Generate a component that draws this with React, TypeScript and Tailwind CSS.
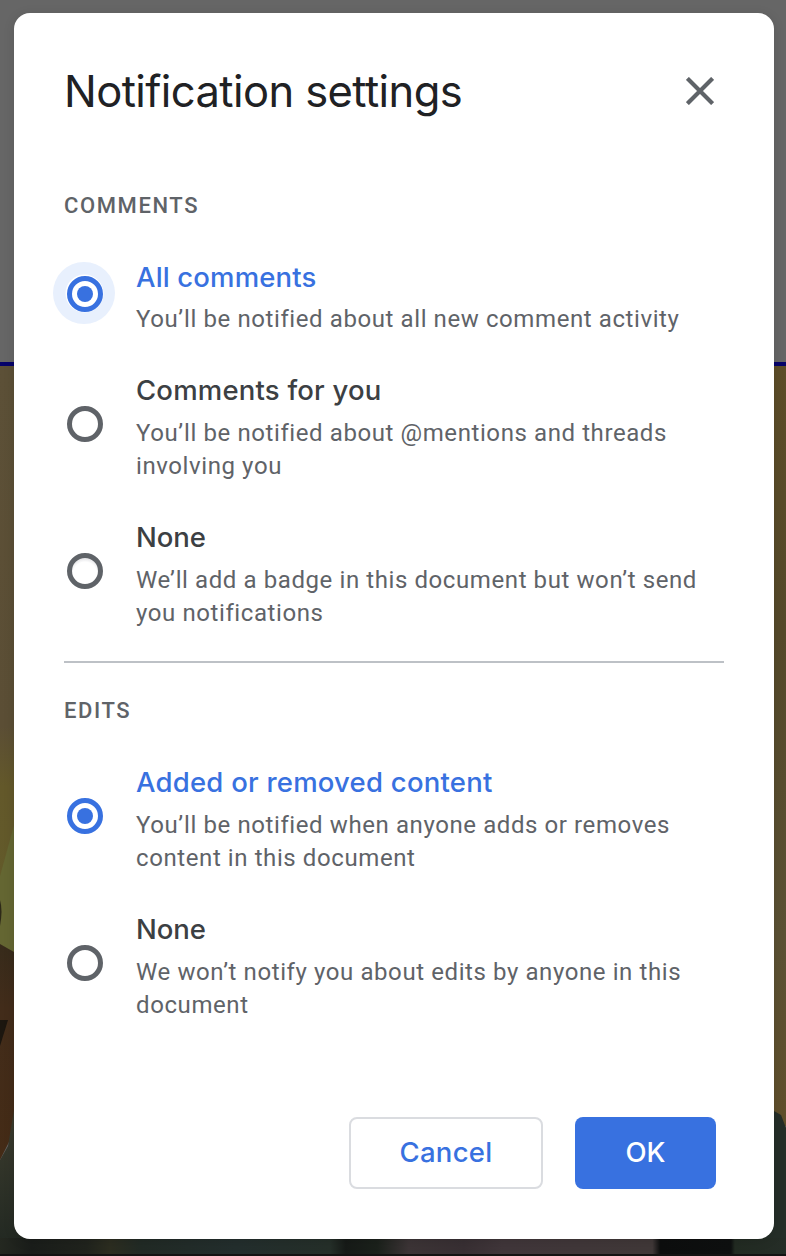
import React from 'react';

type OptionProps = {
  label: string;
  lines: string[];
  checked?: boolean;
  focused?: boolean;
  shaded?: boolean;
  labelSpacing: string;
};

function Radio({ checked, focused, shaded }: { checked?: boolean; focused?: boolean; shaded?: boolean }) {
  const color = checked ? '#3871e0' : '#5f6368';
  return (
    <svg className="mb-[0.5px] -ml-[11px] size-16 shrink-0" viewBox="0 0 64 64" aria-hidden="true">
      <defs>
        <radialGradient id="radio-shade" gradientUnits="userSpaceOnUse" cx="32" cy="35" r="17">
          <stop offset="0.7" stopColor="#ffffff" />
          <stop offset="1" stopColor="#dcdce0" />
        </radialGradient>
      </defs>
      {focused && <circle cx="31" cy="31" r="31" fill="#e8f0fd" />}
      {focused && <circle cx="31.5" cy="31.5" r="19" fill="#fff" />}
      <circle cx="32" cy="32" r="15.5" fill={shaded ? 'url(#radio-shade)' : '#fff'} stroke={color} strokeWidth="5" />
      {checked && <circle cx="32" cy="32" r="8" fill={color} />}
    </svg>
  );
}

function Option({ label, lines, checked, focused, shaded, labelSpacing }: OptionProps) {
  return (
    <label className="flex items-center gap-[19px]">
      <Radio checked={checked} focused={focused} shaded={shaded} />
      <span className="flex flex-col gap-[6.5px] pt-[19px] pb-[14.5px]">
        <span
          className={`font-['Inter',sans-serif] text-[27.5px] leading-10 font-medium whitespace-nowrap ${labelSpacing} ${
            checked ? 'text-[#3871e0]' : 'text-[#3c4043]'
          }`}
        >
          {label}
        </span>
        <span className="font-['Roboto',sans-serif] text-2xl leading-[33.5px] tracking-[0.59px] text-[#5f6368]">
          {lines.map((line) => (
            <span key={line} className="block whitespace-nowrap">
              {line}
            </span>
          ))}
        </span>
      </span>
    </label>
  );
}

function SectionTitle({ children }: { children: React.ReactNode }) {
  return (
    <h2 className="font-['Roboto',sans-serif] text-[22px] leading-8 font-medium tracking-[1.6px] text-[#5f6368]">
      {children}
    </h2>
  );
}

function Backdrop() {
  return (
    <svg className="absolute inset-0" width="786" height="1256" viewBox="0 0 786 1256" aria-hidden="true">
      <defs>
        <linearGradient id="wall-left" x1="0" y1="0" x2="0" y2="1">
          <stop offset="0" stopColor="#5c5037" />
          <stop offset="0.6" stopColor="#5b4e35" />
          <stop offset="0.7" stopColor="#63582a" />
          <stop offset="1" stopColor="#625c2a" />
        </linearGradient>
        <linearGradient id="wall-right" x1="0" y1="0" x2="0" y2="1">
          <stop offset="0" stopColor="#5d4d28" />
          <stop offset="0.35" stopColor="#55492a" />
          <stop offset="0.75" stopColor="#5b5134" />
          <stop offset="1" stopColor="#604f2b" />
        </linearGradient>
        <linearGradient id="wood" x1="0" y1="0" x2="0" y2="1">
          <stop offset="0" stopColor="#372b1b" />
          <stop offset="0.3" stopColor="#422c1a" />
          <stop offset="1" stopColor="#442b16" />
        </linearGradient>
        <linearGradient id="ground" x1="0" y1="0" x2="0" y2="1">
          <stop offset="0" stopColor="#3c3c2e" />
          <stop offset="1" stopColor="#202721" />
        </linearGradient>
        <linearGradient id="floor">
          <stop offset="0" stopColor="#242820" />
          <stop offset="0.04" stopColor="#1a1d1a" />
          <stop offset="0.11" stopColor="#20231d" />
          <stop offset="0.14" stopColor="#2c2d20" />
          <stop offset="0.18" stopColor="#212a25" />
          <stop offset="0.3" stopColor="#232e2d" />
          <stop offset="0.42" stopColor="#252f29" />
          <stop offset="0.44" stopColor="#161a17" />
          <stop offset="0.48" stopColor="#1b211b" />
          <stop offset="0.52" stopColor="#3c3436" />
          <stop offset="0.59" stopColor="#382f33" />
          <stop offset="0.64" stopColor="#40363a" />
          <stop offset="0.83" stopColor="#403838" />
          <stop offset="0.84" stopColor="#0d0e0e" />
          <stop offset="0.93" stopColor="#0e1010" />
          <stop offset="0.935" stopColor="#222b22" />
          <stop offset="1" stopColor="#252d27" />
        </linearGradient>
      </defs>
      <rect width="786" height="362" fill="#666666" />
      <rect y="366" width="393" height="600" fill="url(#wall-left)" />
      <rect x="393" y="366" width="393" height="760" fill="url(#wall-right)" />
      <path d="M14 825 0 876v72l14 4z" fill="#646632" />
      <path d="M0 900q3 10 0 26z" fill="#2d2918" />
      <path d="M0 944 14 952v180L0 1160z" fill="url(#wood)" />
      <path d="M0 1020h8L0 1046z" fill="#1c160f" />
      <path d="M14 1110 8 1146 0 1160v96h393v-60H14z" fill="url(#ground)" />
      <path d="M774 1111 781 1115 786 1128v128H393v-60h381z" fill="#252e28" />
      <rect y="1238" width="786" height="17" fill="url(#floor)" />
      <rect y="1254" width="786" height="2" fill="#141313" />
      <rect y="362" width="786" height="4" fill="#06036a" />
    </svg>
  );
}

export default function App() {
  return (
    <div className="relative h-[1256px] w-[786px] overflow-hidden bg-[#666666] px-[14px] pt-[13px]">
      <Backdrop />
      <section
        role="dialog"
        aria-label="Notification settings"
        className="relative flex h-[1226px] w-[760px] flex-col rounded-2xl bg-white px-[50px] shadow-[0_2px_12px_rgba(0,0,0,0.12)]"
      >
        <header className="flex items-center justify-between pt-[50px] pr-[10px]">
          <h1 className="font-['Inter',sans-serif] text-[43.5px] leading-[56px] font-normal tracking-[-0.58px] whitespace-nowrap text-[#202124]">
            Notification settings
          </h1>
          <button type="button" aria-label="Close">
            <svg width="28" height="28" viewBox="0 0 28 28" fill="none" stroke="#5f6368" strokeWidth="4.2">
              <path d="M1.4 1.4 26.6 26.6M26.6 1.4 1.4 26.6" />
            </svg>
          </button>
        </header>

        <div className="pt-[71px]">
          <SectionTitle>COMMENTS</SectionTitle>
          <div className="mt-[15.5px]">
            <Option
              label="All comments"
              lines={['You’ll be notified about all new comment activity']}
              checked
              focused
              labelSpacing="tracking-[0.15px]"
            />
            <Option
              label="Comments for you"
              lines={['You’ll be notified about @mentions and threads', 'involving you']}
              labelSpacing="tracking-[0.2px]"
            />
            <Option
              label="None"
              lines={['We’ll add a badge in this document but won’t send', 'you notifications']}
              shaded
              labelSpacing="tracking-[-0.1px]"
            />
          </div>
        </div>

        <hr className="mt-4 border-t-2 border-[#bdc1c6]" />

        <div className="pt-8">
          <SectionTitle>EDITS</SectionTitle>
          <div className="mt-4">
            <Option
              label="Added or removed content"
              lines={['You’ll be notified when anyone adds or removes', 'content in this document']}
              checked
              labelSpacing="tracking-[0.23px]"
            />
            <Option
              label="None"
              lines={['We won’t notify you about edits by anyone in this', 'document']}
              labelSpacing="tracking-[-0.1px]"
            />
          </div>
        </div>

        <footer className="mt-auto mb-[50px] flex justify-end gap-8 pr-2 font-['Inter',sans-serif] text-[27.5px] font-medium">
          <button
            type="button"
            className="h-[72px] w-[194px] rounded-lg border-2 border-[#dadce0] tracking-[0.3px] text-[#3871e0]"
          >
            Cancel
          </button>
          <button type="button" className="h-[72px] w-[141px] rounded-lg bg-[#3871e0] text-white">
            OK
          </button>
        </footer>
      </section>
    </div>
  );
}
